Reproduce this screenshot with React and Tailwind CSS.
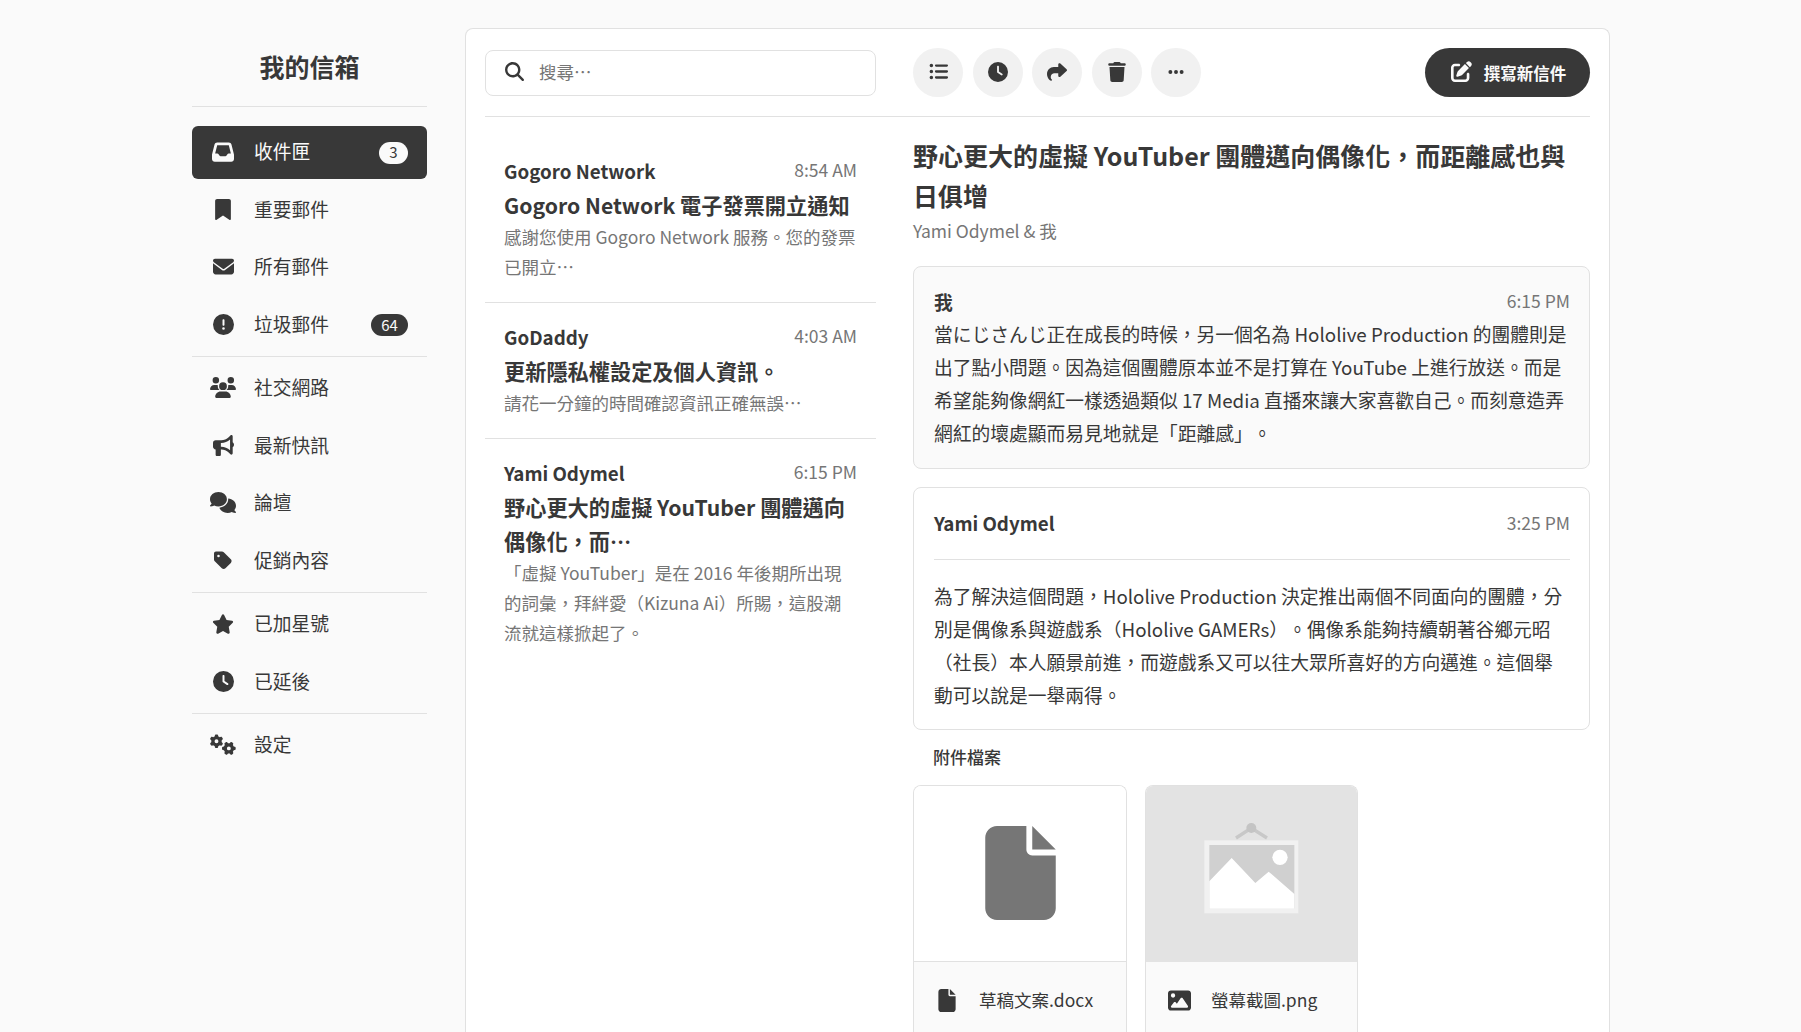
import React from 'react';
import {
  FaInbox, FaBookmark, FaEnvelope, FaCircleExclamation, FaUsers, FaBullhorn, FaComments,
  FaTag, FaStar, FaClock, FaGears, FaMagnifyingGlass, FaListUl, FaShare, FaTrash, FaEllipsis, FaPenToSquare, FaFile, FaImage,
} from 'react-icons/fa6';

const navGroups = [
  [
    { icon: FaInbox, size: 'h-[22px] w-[22px]', label: '收件匣', badge: '3', active: true },
    { icon: FaBookmark, size: 'h-[21px] w-[16px]', label: '重要郵件' },
    { icon: FaEnvelope, size: 'h-[21px] w-[21px]', label: '所有郵件' },
    { icon: FaCircleExclamation, size: 'h-[21px] w-[21px]', label: '垃圾郵件', badge: '64' },
  ],
  [
    { icon: FaUsers, size: 'h-[21px] w-[26px]', label: '社交網路' },
    { icon: FaBullhorn, size: 'h-[21px] w-[21px]', label: '最新快訊' },
    { icon: FaComments, size: 'h-[21px] w-[26px]', label: '論壇' },
    { icon: FaTag, size: 'h-[21px] w-[18px]', label: '促銷內容' },
  ],
  [
    { icon: FaStar, size: 'h-[20px] w-[22px]', label: '已加星號' },
    { icon: FaClock, size: 'h-[21px] w-[21px]', label: '已延後' },
  ],
  [{ icon: FaGears, size: 'h-[21px] w-[26px]', label: '設定' }],
];

const mails = [
  {
    from: 'Gogoro Network',
    time: '8:54 AM',
    subject: 'Gogoro Network 電子發票開立通知',
    preview: '感謝您使用 Gogoro Network 服務。您的發票已開立⋯',
  },
  {
    from: 'GoDaddy',
    time: '4:03 AM',
    subject: '更新隱私權設定及個人資訊。',
    preview: '請花一分鐘的時間確認資訊正確無誤⋯',
  },
  {
    from: 'Yami Odymel',
    time: '6:15 PM',
    subject: '野心更大的虛擬 YouTuber 團體邁向偶像化，而⋯',
    preview: '「虛擬 YouTuber」是在 2016 年後期所出現的詞彙，拜絆愛（Kizuna Ai）所賜，這股潮流就這樣掀起了。',
  },
];

const toolbar = [
  { icon: FaListUl, size: 'h-[19px] w-[19px]' },
  { icon: FaClock, size: 'h-[20px] w-[20px]' },
  { icon: FaShare, size: 'h-[20px] w-[20px]' },
  { icon: FaTrash, size: 'h-[20px] w-[18px]' },
  { icon: FaEllipsis, size: 'h-[18px] w-[16px]' },
];

const Sidebar = () => (
  <aside className="w-[235px] shrink-0">
    <div className="flex h-[79px] items-center justify-center border-b border-[#e1e1e1] text-[25px] font-bold">
      我的信箱
    </div>
    <nav className="mt-[19px] flex flex-col gap-[4.5px]">
      {navGroups.map((group, i) => (
        <React.Fragment key={i}>
          {i > 0 && <div className="my-[0.25px] border-t border-[#e1e1e1]" />}
          {group.map(({ icon: Icon, size, label, badge, active }) => (
            <a
              key={label}
              className={`flex h-[53px] items-center rounded-md pl-[19px] pr-[19px] ${
                active ? 'bg-[#383838] text-[#fafafa]' : ''
              }`}
            >
              <span className="flex w-[24px] justify-center">
                <Icon className={`${size} -mt-[2px] max-w-none shrink-0`} />
              </span>
              <span className="-mt-[2px] ml-[19px] flex-1">{label}</span>
              {badge && (
                <span
                  className={`flex h-[22px] items-center justify-center rounded-full text-[15px] ${
                    active ? 'w-[29px] bg-[#fafafa] text-[#383838]' : 'w-[37px] bg-[#383838] text-[#fafafa]'
                  }`}
                >
                  {badge}
                </span>
              )}
            </a>
          ))}
        </React.Fragment>
      ))}
    </nav>
  </aside>
);

const Toolbar = () => (
  <div className="flex items-center border-b border-[#e1e1e1] pb-[19px]">
    <div className="flex h-[46px] w-[391px] items-center rounded-lg border border-[#e1e1e1] pl-[19px]">
      <FaMagnifyingGlass className="-mt-[2px] h-[19px] w-[19px] shrink-0" />
      <input
        placeholder="搜尋⋯"
        className="ml-[15px] w-full text-[17.5px] outline-none placeholder:text-[#767676]"
      />
    </div>
    <div className="ml-[37px] flex gap-[9.5px]">
      {toolbar.map(({ icon: Icon, size }, i) => (
        <button key={i} className="flex h-[49px] w-[50px] items-center justify-center rounded-full bg-[#f1f1f1]">
          <Icon className={`${size} -mt-[2px]`} />
        </button>
      ))}
    </div>
    <button className="ml-auto flex h-[49px] w-[165px] items-center justify-center rounded-full bg-[#383838] pl-[2px] text-[16.5px] font-semibold text-[#fafafa]">
      <FaPenToSquare className="-mt-[2px] h-[21px] w-[21px]" />
      <span className="ml-[12px] mt-[2px]">撰寫新信件</span>
    </button>
  </div>
);

const MailList = () => (
  <div className="w-[391px] shrink-0 pt-[20px]">
    {mails.map((mail, i) => (
      <div key={mail.from} className={`px-[19px] pb-[20px] pt-[20px] ${i < mails.length - 1 ? 'border-b border-[#e1e1e1]' : ''}`}>
        <div className="flex h-[30px] items-center justify-between">
          <span className="-mt-[2px] font-semibold">{mail.from}</span>
          <span className="-mt-[3px] text-[17.5px] text-[#767676]">{mail.time}</span>
        </div>
        <div className="mt-[1px] text-[21.2px] font-bold leading-[34px]">{mail.subject}</div>
        <div className="text-[17.5px] leading-[30px] text-[#767676]">{mail.preview}</div>
      </div>
    ))}
  </div>
);

const PicturePlaceholder = () => (
  <svg viewBox="905 150 303 291" className="mb-[14px] h-[97px] w-[101px]">
    <path d="M1010 207 L1056 177 L1103 207" fill="none" stroke="#c8c8c8" strokeWidth="10" />
    <circle cx="1056" cy="177" r="15" fill="#c4c4c4" />
    <rect x="915" y="214" width="282" height="219" fill="#f1f1f1" />
    <rect x="930" y="228" width="255" height="191" fill="#d0d0d0" />
    <path d="M930 337 L997 267 L1068 342 L1108 308 L1185 375 V419 H930 Z" fill="#fff" />
    <circle cx="1142" cy="265" r="23" fill="#fff" />
  </svg>
);

const Attachment = ({ preview, icon: Icon, iconSize, name, dark, width }) => (
  <div className={`${width} overflow-hidden rounded-t-lg border border-b-0 border-[#e1e1e1]`}>
    <div className={`flex h-[176px] items-center justify-center ${dark ? 'bg-[#e3e3e3]' : 'border-b border-[#e1e1e1] bg-white'}`}>
      {preview}
    </div>
    <div className="flex h-[90px] items-start bg-[#fafafa] pl-[24px] pt-[23px] text-[17.5px] leading-[30px]">
      <span className="flex h-[30px] w-[18px] items-center justify-center">
        <Icon className={`${iconSize} max-w-none shrink-0`} />
      </span>
      <span className="ml-[23px]">{name}</span>
    </div>
  </div>
);

const MailDetail = () => (
  <div className="min-w-0 flex-1 pt-[18px]">
    <h1 className="text-[25px] font-bold leading-[40px]">野心更大的虛擬 YouTuber 團體邁向偶像化，而距離感也與日俱增</h1>
    <div className="mt-[1px] text-[17.5px] leading-[30px] text-[#767676]">Yami Odymel & 我</div>
    <div className="mt-[20px] rounded-lg border border-[#e1e1e1] bg-[#fafafa] pb-[19px] pl-[20px] pr-[19px] pt-[20px]">
      <div className="flex h-[30px] items-center justify-between">
        <span className="font-bold">我</span>
        <span className="-mt-[2px] text-[17.5px] text-[#767676]">6:15 PM</span>
      </div>
      <p className="leading-[33px]">
        當にじさんじ正在成長的時候，另一個名為 Hololive Production 的團體則是出了點小問題。因為這個團體原本並不是打算在 YouTube 上進行放送。而是希望能夠像網紅一樣透過類似 17 Media 直播來讓大家喜歡自己。而刻意造弄網紅的壞處顯而易見地就是「距離感」。
      </p>
    </div>
    <div className="mt-[18px] rounded-lg border border-[#e1e1e1] pb-[18px] pl-[20px] pr-[19px] pt-[21px]">
      <div className="flex h-[30px] items-center justify-between">
        <span className="-mt-[2px] font-semibold">Yami Odymel</span>
        <span className="-mt-[2px] text-[17.5px] text-[#767676]">3:25 PM</span>
      </div>
      <div className="mb-[19px] mt-[20px] border-t border-[#e1e1e1]" />
      <p className="leading-[33px]">
        為了解決這個問題，Hololive Production 決定推出兩個不同面向的團體，分別是偶像系與遊戲系（Hololive GAMERs）。偶像系能夠持續朝著谷鄉元昭（社長）本人願景前進，而遊戲系又可以往大眾所喜好的方向邁進。這個舉動可以說是一舉兩得。
      </p>
    </div>
    <div className="mt-[12px] pl-[20px] text-[17px] font-medium leading-[30px]">附件檔案</div>
    <div className="mt-[13px] flex gap-[18px]">
      <Attachment
        width="w-[214px]"
        preview={<FaFile className="mb-[2px] h-[94px] w-[71px] text-[#767676]" />}
        icon={FaFile}
        iconSize="h-[23px] w-[18px]"
        name="草稿文案.docx"
      />
      <Attachment
        dark
        width="w-[213px]"
        preview={<PicturePlaceholder />}
        icon={FaImage}
        iconSize="h-[23px] w-[23px]"
        name="螢幕截圖.png"
      />
    </div>
  </div>
);

export default function App() {
  return (
    <div className="h-screen overflow-hidden bg-[#fafafa] text-[18.75px] text-[#383838] [font-family:'Noto_Sans_CJK_TC','Noto_Sans',sans-serif] [text-spacing-trim:space-all]">
      <div className="ml-[192px] flex w-[1418px] gap-[38px] pt-[28px]">
        <Sidebar />
        <main className="min-w-0 flex-1 rounded-t-lg border border-b-0 border-[#e1e1e1] bg-white px-[19px] pt-[19px]">
          <Toolbar />
          <div className="flex gap-[37px]">
            <MailList />
            <MailDetail />
          </div>
        </main>
      </div>
    </div>
  );
}
